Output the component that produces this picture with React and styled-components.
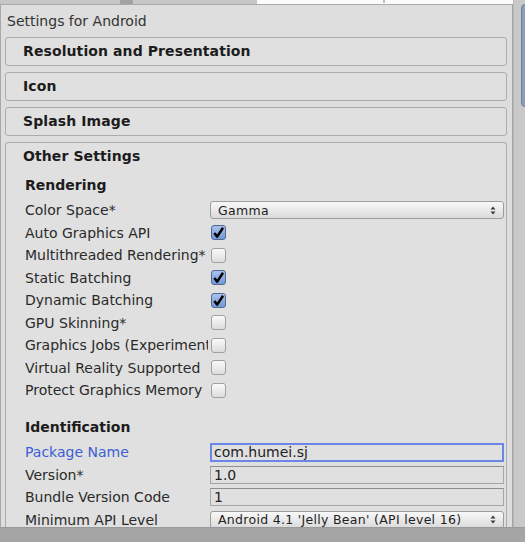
import React from 'react';
import styled, { createGlobalStyle } from 'styled-components';

const GlobalStyle = createGlobalStyle`
  html, body {
    margin: 0;
    padding: 0;
    background: #a5a5a5;
  }
  body {
    font-family: "DejaVu Sans", Verdana, sans-serif;
    color: #262626;
  }
`;

const rendering = [
  { label: 'Color Space*', kind: 'select', value: 'Gamma' },
  { label: 'Auto Graphics API', kind: 'check', value: true },
  { label: 'Multithreaded Rendering*', kind: 'check', value: false },
  { label: 'Static Batching', kind: 'check', value: true },
  { label: 'Dynamic Batching', kind: 'check', value: true },
  { label: 'GPU Skinning*', kind: 'check', value: false },
  { label: 'Graphics Jobs (Experimental)*', kind: 'check', value: false },
  { label: 'Virtual Reality Supported', kind: 'check', value: false },
  { label: 'Protect Graphics Memory', kind: 'check', value: false },
];

const identification = [
  { label: 'Package Name', kind: 'field', value: 'com.humei.sj', focused: true },
  { label: 'Version*', kind: 'field', value: '1.0' },
  { label: 'Bundle Version Code', kind: 'field', value: '1' },
  { label: 'Minimum API Level', kind: 'select', value: "Android 4.1 'Jelly Bean' (API level 16)" },
];

const Arrows = () => (
  <svg width="6" height="9" viewBox="0 0 6 9">
    <path d="M3 0.5 L5.5 3.5 L0.5 3.5 Z" fill="#3a3a3a" />
    <path d="M3 8.5 L5.5 5.5 L0.5 5.5 Z" fill="#3a3a3a" />
  </svg>
);

const Tick = () => (
  <svg width="13" height="13" viewBox="0 0 13 13">
    <path d="M2.3 7 L5.2 10.6 L11 1.8" fill="none" stroke="#000" strokeWidth="2.5" strokeLinejoin="round" />
  </svg>
);

const Control = ({ item }) => {
  if (item.kind === 'check') {
    return <Checkbox checked={item.value}>{item.value && <Tick />}</Checkbox>;
  }
  if (item.kind === 'select') {
    return (
      <Select>
        <span>{item.value}</span>
        <Arrows />
      </Select>
    );
  }
  return <Field focused={item.focused}>{item.value}</Field>;
};

const App = () => {
  return (
    <Window>
      <GlobalStyle />
      <Body>
        <Main>
          <TabStrip>
            <TabLeft>
              <TabGrip />
            </TabLeft>
            <TabRight>
              <TabMark />
            </TabRight>
          </TabStrip>
          <Inspector>
            <Title>Settings for Android</Title>
            <Foldout>
              <FoldoutHeader>Resolution and Presentation</FoldoutHeader>
            </Foldout>
            <Foldout>
              <FoldoutHeader>Icon</FoldoutHeader>
            </Foldout>
            <Foldout>
              <FoldoutHeader>Splash Image</FoldoutHeader>
            </Foldout>
            <Foldout open>
              <FoldoutHeader>Other Settings</FoldoutHeader>
              <Section>
                <SectionTitle>Rendering</SectionTitle>
                <Rows>
                  {rendering.map((item) => (
                    <Row key={item.label}>
                      <Label>{item.label}</Label>
                      <Control item={item} />
                    </Row>
                  ))}
                </Rows>
                <SectionTitle spaced>Identification</SectionTitle>
                <Rows>
                  {identification.map((item) => (
                    <Row key={item.label}>
                      <Label active={item.focused}>{item.label}</Label>
                      <Control item={item} />
                    </Row>
                  ))}
                </Rows>
              </Section>
            </Foldout>
          </Inspector>
        </Main>
        <Scrollbar>
          <Thumb />
        </Scrollbar>
      </Body>
      <StatusBar />
    </Window>
  );
};

export default App;

const Window = styled.div`
  width: 525px;
  height: 542px;
  display: flex;
  flex-direction: column;
  overflow: hidden;
`;

const Body = styled.div`
  flex: 1;
  min-height: 0;
  display: flex;
`;

const Main = styled.div`
  width: 513px;
  display: flex;
  flex-direction: column;
`;

const TabStrip = styled.div`
  height: 4px;
  display: flex;
  border-bottom: 1px solid #a9a9a9;
`;

const TabLeft = styled.div`
  width: 257px;
  background: #c6c6c6;
  padding-left: 120px;
  box-sizing: border-box;
`;

const TabGrip = styled.div`
  width: 13px;
  height: 4px;
  background: #a2a2a2;
`;

const TabRight = styled.div`
  flex: 1;
  background: #fbfbfb;
  padding-left: 126px;
`;

const TabMark = styled.div`
  width: 2px;
  height: 3px;
  background: #bcbcbc;
`;

const Inspector = styled.div`
  flex: 1;
  min-height: 0;
  overflow: hidden;
  background: #dedede;
  border-left: 1px solid #a8a8a8;
  border-right: 1px solid #a3a3a3;
  padding: 0 5px 0 4px;
`;

const Title = styled.div`
  margin-top: 5px;
  margin-bottom: 5px;
  padding-left: 2px;
  font-size: 14px;
  line-height: 22px;
  color: #333;
`;

const Foldout = styled.div`
  background: #e0e0e0;
  border: 1px solid #acacac;
  border-radius: 3px;
  margin-bottom: 6px;
  ${({ open }) => open && 'border-bottom: none; border-radius: 3px 3px 0 0;'}
`;

const FoldoutHeader = styled.div`
  height: 27px;
  line-height: 27px;
  padding-left: 17px;
  font-size: 14px;
  font-weight: bold;
  letter-spacing: 0.1px;
  color: #1c1c1c;
`;

const Section = styled.div`
  padding: 0 2px 0 19px;
`;

const SectionTitle = styled.div`
  margin-top: ${({ spaced }) => (spaced ? '14.5px' : '4px')};
  height: 22px;
  line-height: 22px;
  font-size: 14px;
  font-weight: bold;
  color: #1c1c1c;
`;

const Rows = styled.div`
  padding-top: 3px;
  display: flex;
  flex-direction: column;
`;

const Row = styled.div`
  height: 22.5px;
  display: grid;
  grid-template-columns: 183px 1fr;
  column-gap: 2px;
  align-items: center;
`;

const Label = styled.div`
  font-size: 14px;
  white-space: nowrap;
  overflow: hidden;
  color: ${({ active }) => (active ? '#3b5fd4' : '#2a2a2a')};
`;

const Checkbox = styled.div`
  width: 13px;
  height: 13px;
  margin-left: 1px;
  border-radius: 3px;
  border: 1px solid ${({ checked }) => (checked ? '#55698f' : '#a0a0a0')};
  background: ${({ checked }) =>
    checked
      ? 'linear-gradient(#a8c2ec, #7198d8)'
      : 'linear-gradient(#fafafa, #dcdcdc)'};
  display: flex;
  align-items: center;
  justify-content: center;
`;

const Select = styled.div`
  height: 16px;
  border: 1px solid #9d9d9d;
  border-radius: 3px;
  background: linear-gradient(#f8f8f8, #dadada);
  display: flex;
  align-items: center;
  justify-content: space-between;
  padding: 0 7px 0 7px;
  font-size: 12.5px;
  letter-spacing: 0.3px;
  color: #1e1e1e;
  white-space: nowrap;
  overflow: hidden;
`;

const Field = styled.div`
  height: ${({ focused }) => (focused ? '15px' : '16px')};
  line-height: ${({ focused }) => (focused ? '15px' : '16px')};
  border: ${({ focused }) => (focused ? '2px solid #6b86e6' : '1px solid #a6a6a6')};
  border-top-color: ${({ focused }) => (focused ? '#6b86e6' : '#8f8f8f')};
  background: #e0e0e0;
  padding-left: ${({ focused }) => (focused ? '2px' : '3px')};
  font-size: 14px;
  color: #222;
  white-space: nowrap;
  overflow: hidden;
`;

const Scrollbar = styled.div`
  width: 12px;
  background: #c9c9c9;
  border-left: 1px solid #b8b8b8;
  box-sizing: border-box;
  padding: 4px 0 0 7px;
  overflow: hidden;
`;

const Thumb = styled.div`
  width: 10px;
  height: 101px;
  border-radius: 4px;
  background: #8c9dba;
  border: 1px solid #70809c;
`;

const StatusBar = styled.div`
  height: 14px;
  background: #a5a5a5;
  border-top: 1px solid #9a9a9a;
`;
